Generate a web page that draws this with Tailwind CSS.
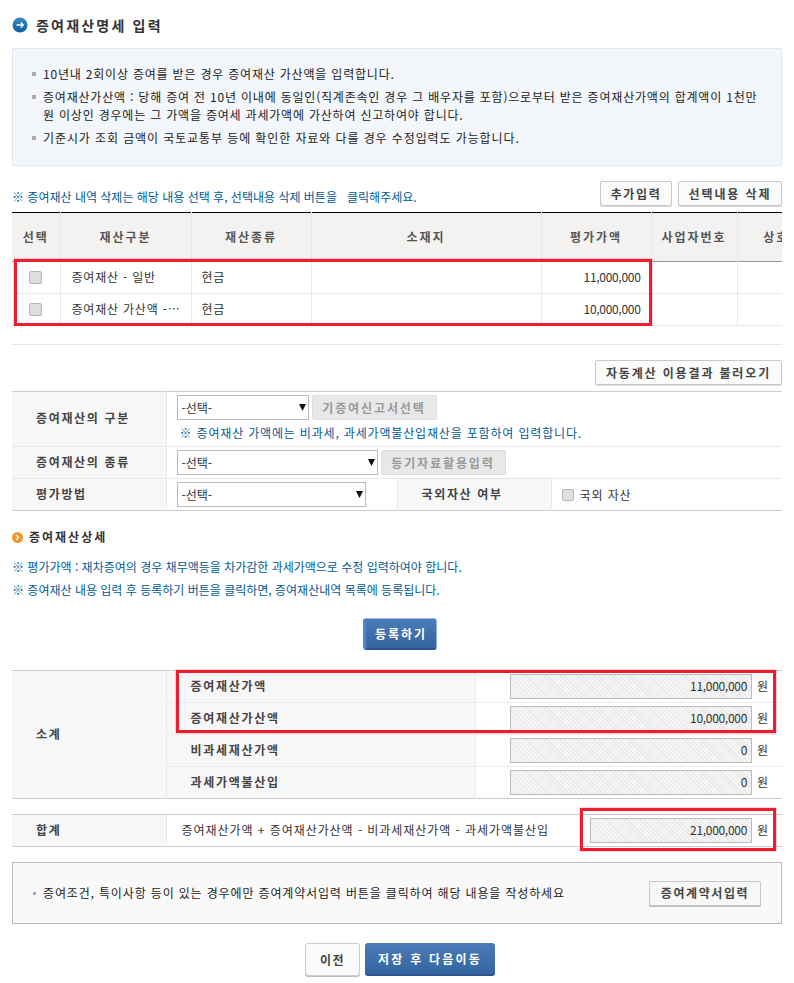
<!DOCTYPE html>
<html lang="ko">
<head>
    <meta charset="UTF-8">
    <title>증여재산명세 입력</title>
    <script src="https://cdn.jsdelivr.net/npm/@tailwindcss/browser@4"></script>
</head>
<body class="bg-white font-['Noto_Sans_CJK_KR','Liberation_Sans',sans-serif] text-[12px] text-[#333]">
<div class="w-[794px] h-[983px] overflow-hidden px-3 relative">

    <!-- title -->
    <div class="flex items-center h-[16px] mt-[17px] gap-2">
        <svg width="16" height="16" viewBox="0 0 16 16"><defs><linearGradient id="bl" x1="0" y1="0" x2="0" y2="1"><stop offset="0" stop-color="#3a8ccb"/><stop offset="1" stop-color="#0f5c9c"/></linearGradient></defs><circle cx="8" cy="8" r="7.5" fill="url(#bl)"/><path d="M4.5 8H11M8.8 5.6 11.2 8 8.8 10.4" fill="none" stroke="#fff" stroke-width="1.4"/></svg>
        <h1 class="text-[14px] font-bold text-[#333] tracking-[2.2px] leading-none">증여재산명세 입력</h1>
    </div>

    <!-- info box -->
    <div class="mt-[15px] h-[118px] bg-[#f3f6fb] border border-[#e0e7f1] pl-[19px] pr-[10px] pt-[16px] text-[#222] tracking-[0.8px]">
        <div class="flex h-[18px] items-center"><span class="w-[4px] h-[4px] bg-[#aaa] mr-[7px] shrink-0"></span>10년내 2회이상 증여를 받은 경우 증여재산 가산액을 입력합니다.</div>
        <div class="flex mt-[5px]"><span class="w-[4px] h-[4px] bg-[#aaa] mr-[7px] mt-[7px] shrink-0"></span><p class="leading-[18px] whitespace-nowrap">증여재산가산액 : 당해 증여 전 10년 이내에 동일인(직계존속인 경우 그 배우자를 포함)으로부터 받은 증여재산가액의 합계액이 1천만<br>원 이상인 경우에는 그 가액을 증여세 과세가액에 가산하여 신고하여야 합니다.</p></div>
        <div class="flex h-[18px] items-center mt-[5px] tracking-[0.9px]"><span class="w-[4px] h-[4px] bg-[#aaa] mr-[7px] shrink-0"></span>기준시가 조회 금액이 국토교통부 등에 확인한 자료와 다를 경우 수정입력도 가능합니다.</div>
    </div>

    <!-- list header -->
    <div class="flex items-end justify-between mt-[15px] h-[25px]">
        <p class="text-[#005b96] leading-none mb-[3px]">※ 증여재산 내역 삭제는 해당 내용 선택 후, 선택내용 삭제 버튼을&nbsp;&nbsp; 클릭해주세요.</p>
        <div class="flex gap-[6px]">
            <button class="w-[72px] h-[25px] bg-[#fbfbfb] border border-[#c8c8c8] rounded-[2px] shadow-[0_1px_0_#ddd] font-bold text-[#444] tracking-[1.6px]">추가입력</button>
            <button class="w-[104px] h-[25px] bg-[#fbfbfb] border border-[#c8c8c8] rounded-[2px] shadow-[0_1px_0_#ddd] font-bold text-[#444] tracking-[1.9px]">선택내용 삭제</button>
        </div>
    </div>

    <!-- list table -->
    <div class="relative mt-[6px] w-[770px] h-[114px] overflow-hidden">
        <table class="table-fixed border-collapse w-[803px] border-t border-black">
            <colgroup><col class="w-[48px]"><col class="w-[131px]"><col class="w-[120px]"><col class="w-[230px]"><col class="w-[110px]"><col class="w-[86px]"><col class="w-[78px]"></colgroup>
            <thead>
                <tr class="h-[49px] bg-[#f3f2f1] border-b border-[#999] font-bold text-[#555] tracking-[2px]">
                    <th class="border-r border-[#e8e8e8]">선택</th>
                    <th class="border-r border-[#e8e8e8]">재산구분</th>
                    <th class="border-r border-[#e8e8e8]">재산종류</th>
                    <th class="border-r border-[#e8e8e8]">소재지</th>
                    <th class="border-r border-[#e8e8e8]">평가가액</th>
                    <th class="border-r border-[#e8e8e8]">사업자번호</th>
                    <th>상호</th>
                </tr>
            </thead>
            <tbody class="text-[#333]">
                <tr class="h-[32px] border-b border-[#e8e8e8]">
                    <td class="border-r border-[#e8e8e8]"><input type="checkbox" class="appearance-none block mx-auto w-[13px] h-[13px] rounded-[2px] border border-[#b5b5b5] bg-[#dedede]"></td>
                    <td class="border-r border-[#e8e8e8] pl-[11px] tracking-[0.8px] whitespace-nowrap pb-[2px]">증여재산 - 일반</td>
                    <td class="border-r border-[#e8e8e8] pl-[10px] tracking-[0.8px] pb-[2px]">현금</td>
                    <td class="border-r border-[#e8e8e8]"></td>
                    <td class="border-r border-[#e8e8e8] text-right pr-[10px] tracking-[-0.3px] pb-[2px]">11,000,000</td>
                    <td class="border-r border-[#e8e8e8]"></td>
                    <td></td>
                </tr>
                <tr class="h-[32px] border-b border-[#e8e8e8]">
                    <td class="border-r border-[#e8e8e8]"><input type="checkbox" class="appearance-none block mx-auto w-[13px] h-[13px] rounded-[2px] border border-[#b5b5b5] bg-[#dedede]"></td>
                    <td class="border-r border-[#e8e8e8] pl-[11px] tracking-[0.8px] whitespace-nowrap pb-[2px]">증여재산 가산액 -⋯</td>
                    <td class="border-r border-[#e8e8e8] pl-[10px] tracking-[0.8px] pb-[2px]">현금</td>
                    <td class="border-r border-[#e8e8e8]"></td>
                    <td class="border-r border-[#e8e8e8] text-right pr-[10px] tracking-[-0.3px] pb-[2px]">10,000,000</td>
                    <td class="border-r border-[#e8e8e8]"></td>
                    <td></td>
                </tr>
            </tbody>
        </table>
        <div class="absolute left-[2px] top-[47px] w-[638px] h-[67px] border-[3px] border-[#ee1c2e] shadow-[0_0_1px_#ee1c2e]"></div>
    </div>

    <div class="mt-[18px] border-t border-[#e5e5e5]"></div>

    <div class="flex justify-end mt-[15px]">
        <button class="w-[187px] h-[25px] bg-[#fbfbfb] border border-[#c8c8c8] rounded-[2px] shadow-[0_1px_0_#ddd] font-bold text-[#444] tracking-[1.85px]">자동계산 이용결과 불러오기</button>
    </div>

    <!-- input form -->
    <table class="table-fixed border-collapse w-[770px] mt-[6px] border-t border-b border-[#ccc]">
        <colgroup><col class="w-[154px]"><col class="w-[231px]"><col class="w-[154px]"><col class="w-[231px]"></colgroup>
        <tbody>
            <tr class="h-[55px] border-b border-[#e8e8e8]">
                <th class="bg-[#f7f7f7] border-r border-[#e8e8e8] text-left pl-[24px] pb-[2px] text-[#444] tracking-[1.65px]">증여재산의 구분</th>
                <td colspan="3" class="pl-[10px] align-top pt-[3px]">
                    <div class="flex gap-[3px]">
                        <div class="relative w-[132px]">
                            <select class="appearance-none w-full h-[25px] border border-[#bbb] bg-white pl-[4px] text-[#333] rounded-none"><option>-선택-</option></select>
                            <svg class="absolute right-[3px] top-[9px]" width="7" height="7" viewBox="0 0 7 7"><path d="M0 0H7L3.5 7Z" fill="#111"/></svg>
                        </div>
                        <button class="w-[125px] h-[25px] bg-[#e8e8e8] border border-[#ddd] rounded-[2px] font-bold text-[#999] tracking-[1.9px]">기증여신고서선택</button>
                    </div>
                    <p class="text-[#005b96] mt-[6px] tracking-[0.83px] pl-[3px] leading-[14px]">※ 증여재산 가액에는 비과세, 과세가액불산입재산을 포함하여 입력합니다.</p>
                </td>
            </tr>
            <tr class="h-[32px] border-b border-[#e8e8e8]">
                <th class="bg-[#f7f7f7] border-r border-[#e8e8e8] text-left pl-[24px] pb-[2px] text-[#444] tracking-[1.65px]">증여재산의 종류</th>
                <td colspan="3" class="pl-[10px]">
                    <div class="flex gap-[3px]">
                        <div class="relative w-[201px]">
                            <select class="appearance-none w-full h-[25px] border border-[#bbb] bg-white pl-[4px] text-[#333] rounded-none"><option>-선택-</option></select>
                            <svg class="absolute right-[3px] top-[9px]" width="7" height="7" viewBox="0 0 7 7"><path d="M0 0H7L3.5 7Z" fill="#111"/></svg>
                        </div>
                        <button class="w-[125px] h-[25px] bg-[#e8e8e8] border border-[#ddd] rounded-[2px] font-bold text-[#999] tracking-[1.9px]">등기자료활용입력</button>
                    </div>
                </td>
            </tr>
            <tr class="h-[32px]">
                <th class="bg-[#f7f7f7] border-r border-[#e8e8e8] text-left pl-[24px] pb-[2px] text-[#444] tracking-[1.65px]">평가방법</th>
                <td class="pl-[10px]">
                    <div class="relative w-[189px]">
                        <select class="appearance-none w-full h-[25px] border border-[#bbb] bg-white pl-[4px] text-[#333] rounded-none"><option>-선택-</option></select>
                        <svg class="absolute right-[3px] top-[9px]" width="7" height="7" viewBox="0 0 7 7"><path d="M0 0H7L3.5 7Z" fill="#111"/></svg>
                    </div>
                </td>
                <th class="bg-[#f7f7f7] border-l border-r border-[#e8e8e8] text-left pl-[24px] pb-[2px] text-[#444] tracking-[1.65px]">국외자산 여부</th>
                <td class="pl-[10px]"><label class="flex items-center gap-[6px] tracking-[0.9px]"><input type="checkbox" class="appearance-none w-[12px] h-[12px] rounded-[2px] border border-[#b5b5b5] bg-[#dedede]">국외 자산</label></td>
            </tr>
        </tbody>
    </table>

    <!-- detail -->
    <div class="flex items-center gap-[6px] mt-[19px] h-[14px]">
        <svg width="11" height="11" viewBox="0 0 11 11"><circle cx="5.5" cy="5.5" r="5.5" fill="#f0962a"/><path d="M4 3 6.5 5.5 4 8" fill="none" stroke="#fff" stroke-width="1.4"/></svg>
        <h2 class="font-bold text-[#333] tracking-[2px] leading-none">증여재산상세</h2>
    </div>
    <p class="text-[#005b96] mt-[16px] leading-[14px]">※ 평가가액 : 재차증여의 경우 채무액등을 차가감한 과세가액으로 수정 입력하여야 합니다.</p>
    <p class="text-[#005b96] mt-[9px] leading-[14px]">※ 증여재산 내용 입력 후 등록하기 버튼을 클릭하면, 증여재산내역 목록에 등록됩니다.</p>

    <div class="flex justify-center pl-[6px] mt-[21px]">
        <button class="w-[74px] h-[32px] bg-linear-to-b from-[#4a7cb9] to-[#35659f] border border-[#8fb6ea] border-b-[2px] border-b-[#2c5488] border-l-[3px] border-l-[#4f86d0] rounded-[3px] font-bold text-white tracking-[2px]">등록하기</button>
    </div>

    <!-- sums -->
    <div class="relative mt-[20px]">
        <table class="table-fixed border-collapse w-[770px] border-t border-b border-[#ccc]">
            <colgroup><col class="w-[154px]"><col class="w-[309px]"><col class="w-[35px]"><col class="w-[242px]"><col class="w-[30px]"></colgroup>
            <tbody>
                <tr class="h-[32px] border-b border-[#ececec]">
                    <th rowspan="4" class="bg-[#f7f7f7] border-r border-[#e8e8e8] text-left pl-[24px] pb-[2px] text-[#444] tracking-[1.65px]">소계</th>
                    <th class="bg-[#f7f7f7] border-r border-[#ececec] text-left pl-[24px] pb-[2px] text-[#444] tracking-[1.7px]">증여재산가액</th>
                    <td></td>
                    <td><div class="h-[25px] border border-[#bbb] text-right pr-[4px] leading-[21px] tracking-[-0.3px] bg-[repeating-linear-gradient(45deg,#f6f6f6,#f6f6f6_2px,#e6e6e6_2px,#e6e6e6_3px)]">11,000,000</div></td>
                    <td class="pl-[5px] pb-[2px]">원</td>
                </tr>
                <tr class="h-[32px] border-b border-[#ececec]">
                    <th class="bg-[#f7f7f7] border-r border-[#ececec] text-left pl-[24px] pb-[2px] text-[#444] tracking-[1.7px]">증여재산가산액</th>
                    <td></td>
                    <td><div class="h-[25px] border border-[#bbb] text-right pr-[4px] leading-[21px] tracking-[-0.3px] bg-[repeating-linear-gradient(45deg,#f6f6f6,#f6f6f6_2px,#e6e6e6_2px,#e6e6e6_3px)]">10,000,000</div></td>
                    <td class="pl-[5px] pb-[2px]">원</td>
                </tr>
                <tr class="h-[32px] border-b border-[#ececec]">
                    <th class="bg-[#f7f7f7] border-r border-[#ececec] text-left pl-[24px] pb-[2px] text-[#444] tracking-[1.7px]">비과세재산가액</th>
                    <td></td>
                    <td><div class="h-[25px] border border-[#bbb] text-right pr-[4px] leading-[21px] tracking-[-0.3px] bg-[repeating-linear-gradient(45deg,#f6f6f6,#f6f6f6_2px,#e6e6e6_2px,#e6e6e6_3px)]">0</div></td>
                    <td class="pl-[5px] pb-[2px]">원</td>
                </tr>
                <tr class="h-[32px]">
                    <th class="bg-[#f7f7f7] border-r border-[#ececec] text-left pl-[24px] pb-[2px] text-[#444] tracking-[1.7px]">과세가액불산입</th>
                    <td></td>
                    <td><div class="h-[25px] border border-[#bbb] text-right pr-[4px] leading-[21px] tracking-[-0.3px] bg-[repeating-linear-gradient(45deg,#f6f6f6,#f6f6f6_2px,#e6e6e6_2px,#e6e6e6_3px)]">0</div></td>
                    <td class="pl-[5px] pb-[2px]">원</td>
                </tr>
            </tbody>
        </table>
        <div class="absolute left-[164px] top-[0px] w-[600px] h-[63px] border-[3px] border-[#ee1c2e] shadow-[0_0_1px_#ee1c2e]"></div>
    </div>

    <div class="relative mt-[15px]">
        <table class="table-fixed border-collapse w-[770px] border-t border-b border-[#ccc]">
            <colgroup><col class="w-[154px]"><col class="w-[424px]"><col class="w-[162px]"><col class="w-[30px]"></colgroup>
            <tbody>
                <tr class="h-[32px]">
                    <th class="bg-[#f7f7f7] border-r border-[#e8e8e8] text-left pl-[24px] pb-[2px] text-[#444] tracking-[1.65px]">합계</th>
                    <td class="pl-[15px] pb-[2px] tracking-[0.95px] whitespace-nowrap">증여재산가액 + 증여재산가산액 - 비과세재산가액 - 과세가액불산입</td>
                    <td><div class="h-[25px] border border-[#bbb] text-right pr-[4px] leading-[21px] tracking-[-0.3px] bg-[repeating-linear-gradient(45deg,#f6f6f6,#f6f6f6_2px,#e6e6e6_2px,#e6e6e6_3px)]">21,000,000</div></td>
                    <td class="pl-[5px] pb-[2px]">원</td>
                </tr>
            </tbody>
        </table>
        <div class="absolute left-[568px] top-[-6px] w-[196px] h-[43px] border-[3px] border-[#ee1c2e] shadow-[0_0_1px_#ee1c2e]"></div>
    </div>

    <!-- contract box -->
    <div class="flex items-center justify-between mt-[15px] h-[62px] bg-[#f9f9f9] border border-[#bbb] pl-[20px] pr-[20px]">
        <p class="flex items-center text-[#222] tracking-[0.85px]"><span class="w-[3px] h-[3px] bg-[#aaa] mr-[7px]"></span>증여조건, 특이사항 등이 있는 경우에만 증여계약서입력 버튼을 클릭하여 해당 내용을 작성하세요</p>
        <button class="w-[112px] h-[25px] bg-[#f7f7f7] border border-[#c8c8c8] rounded-[2px] shadow-[0_1px_0_#bbb] font-bold text-[#444] tracking-[1.6px]">증여계약서입력</button>
    </div>

    <!-- page buttons -->
    <div class="flex justify-center gap-[5px] pl-[6px] mt-[19px]">
        <button class="w-[55px] h-[33px] bg-[#fbfbfb] border border-[#ccc] rounded-[3px] shadow-[0_1px_0_#bbb] font-bold text-[#444] tracking-[1.5px]">이전</button>
        <button class="w-[130px] h-[33px] bg-linear-to-b from-[#4a7cb9] to-[#35659f] border-b-[2px] border-[#2c5488] rounded-[3px] font-bold text-white tracking-[2.2px]">저장 후 다음이동</button>
    </div>
</div>
</body>
</html>
